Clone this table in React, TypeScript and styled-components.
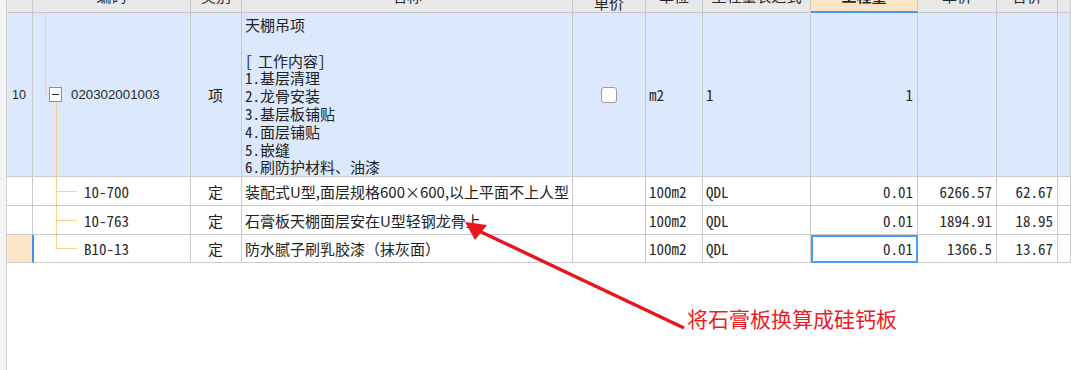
import React from "react";
import styled, { createGlobalStyle, css } from "styled-components";

const GlobalStyle = createGlobalStyle`
  html, body { margin: 0; padding: 0; background: #fff; }
  body { font-family: "Noto Sans CJK SC", "Noto Sans", sans-serif; color: #222; }
`;

const LINE = "#cacaca";
const TREE = "#fbcf8e";
const BLUE = "#3d8ff0";

type Align = "left" | "center" | "right";
type Tone = "blue" | "white" | "mark";
const justify: Record<Align, string> = { left: "flex-start", center: "center", right: "flex-end" };
const toneBg: Record<Tone, string> = { blue: "#dce8fb", white: "#ffffff", mark: "#fde5c8" };

const Page = styled.div`
  position: relative;
  display: flex;
  width: 1071px;
  height: 370px;
  overflow: hidden;
  background: #fff;
`;

const Gutter = styled.div`
  flex: 0 0 7px;
  box-sizing: border-box;
  background: #f3f3f3;
  border-right: 1px solid #d3d3d3;
`;

const Sheet = styled.div`
  flex: 1;
  min-width: 0;
`;

const Grid = styled.div`
  display: grid;
  grid-template-columns: 26px 158px 51px 331px 73px 57px 108px 107px 79px 61px 1fr;
  grid-template-rows: 13px 164px 29px 29px 28px;
`;

const HeadCell = styled.div<{ $active?: boolean }>`
  box-sizing: border-box;
  display: flex;
  align-items: flex-end;
  justify-content: center;
  overflow: hidden;
  background: ${(p) => (p.$active ? "#fde4c4" : "#e8e8e8")};
  border-right: 1px solid ${LINE};
  border-bottom: ${(p) => (p.$active ? "2px solid #4994ee" : "1px solid #c4c4c4")};
`;

const HeadLabel = styled.span<{ $lift: number; $bold?: boolean }>`
  display: block;
  font-size: 15px;
  line-height: 17px;
  padding-bottom: ${(p) => p.$lift}px;
  white-space: nowrap;
  text-align: center;
  font-weight: ${(p) => (p.$bold ? 700 : 400)};
  color: #2a2a2a;
`;

const Cell = styled.div<{ $tone: Tone; $align?: Align; $selected?: boolean; $top?: boolean; $edge?: boolean }>`
  box-sizing: border-box;
  display: flex;
  align-items: ${(p) => (p.$top ? "flex-start" : "center")};
  justify-content: ${(p) => justify[p.$align ?? "left"]};
  padding: 0 4px 0 3px;
  overflow: hidden;
  white-space: nowrap;
  background: ${(p) => toneBg[p.$tone]};
  border-right: 1px solid ${(p) => (p.$edge ? BLUE : LINE)};
  border-bottom: 1px solid ${LINE};
  font-size: 15px;
  color: #222;
  ${(p) =>
    p.$selected &&
    css`
      outline: 2px solid #4a9cf6;
      outline-offset: -2px;
    `}
`;

const TreeCell = styled.div<{ $tone: Tone; $focus?: boolean }>`
  box-sizing: border-box;
  display: flex;
  align-items: stretch;
  overflow: hidden;
  background: ${(p) => toneBg[p.$tone]};
  border-right: 1px solid ${LINE};
  border-bottom: 1px solid ${LINE};
  box-shadow: ${(p) => (p.$focus ? `inset 1px 0 0 ${BLUE}` : "none")};
`;

const Indent = styled.div<{ $w: number }>`
  flex: 0 0 ${(p) => p.$w}px;
`;

const Elbow = styled.div<{ $w: number; $last?: boolean }>`
  flex: 0 0 ${(p) => p.$w}px;
  display: flex;
  flex-direction: column;
  &::before {
    content: "";
    flex: 1;
    border-left: 1px solid ${TREE};
    border-bottom: 1px solid ${TREE};
  }
  &::after {
    content: "";
    flex: 1;
    border-left: 1px solid ${(p) => (p.$last ? "transparent" : TREE)};
  }
`;

const ToggleColumn = styled.div`
  flex: 0 0 13px;
  display: flex;
  flex-direction: column;
  &::before {
    content: "";
    flex: 1;
  }
  &::after {
    content: "";
    flex: 1;
    margin-left: 7px;
    border-left: 1px solid ${TREE};
  }
`;

const ToggleBox = styled.span`
  box-sizing: border-box;
  display: flex;
  align-items: center;
  justify-content: center;
  width: 13px;
  height: 15px;
  border: 1px solid #8d8d8d;
  background: #fff;
  &::before {
    content: "";
    width: 7px;
    height: 1.5px;
    background: #2a2a2a;
  }
`;

const CodeText = styled.span<{ $gap: number }>`
  align-self: center;
  margin-left: ${(p) => p.$gap}px;
  font-family: "Liberation Sans", Arial, sans-serif;
  font-size: 13.3px;
  color: #2a2a2a;
`;

const Mono = styled.span`
  font-family: "Noto Sans Mono CJK SC", "Liberation Mono", monospace;
  font-size: 15px;
  color: #2a2a2a;
`;

const Lead = styled.span<{ $w: number }>`
  display: inline-block;
  width: ${(p) => p.$w}px;
  font-family: "Noto Sans Mono CJK SC", "Liberation Mono", monospace;
`;

const RowNo = styled.span`
  font-family: "Liberation Sans", Arial, sans-serif;
  font-size: 12.5px;
  color: #2a2a2a;
`;

const Lines = styled.div`
  padding-top: 3px;
  font-size: 15px;
  line-height: 17.8px;
  white-space: nowrap;
  color: #222;
`;

const Check = styled.span`
  box-sizing: border-box;
  width: 16px;
  height: 16px;
  border: 1px solid #9c9c9c;
  border-radius: 3px;
  background: #fff;
`;

const Overlay = styled.svg`
  position: absolute;
  left: 0;
  top: 0;
  pointer-events: none;
`;

const Callout = styled.div`
  position: absolute;
  left: 687px;
  top: 305px;
  font-family: "Noto Sans CJK SC", sans-serif;
  font-size: 21px;
  line-height: 26px;
  color: #ea1c24;
  white-space: nowrap;
`;

const headers: { label: React.ReactNode; lift: number; active?: boolean }[] = [
  { label: "", lift: 8 },
  { label: "编码", lift: 8 },
  { label: "类别", lift: 8 },
  { label: "名称", lift: 8 },
  { label: (<>锁定综合<br />单价</>), lift: 1 },
  { label: "单位", lift: 8 },
  { label: "工程量表达式", lift: 8 },
  { label: "工程量", lift: 7, active: true },
  { label: "单价", lift: 8 },
  { label: "合价", lift: 8 },
  { label: "", lift: 8 },
];

const workLines: { lead?: string; leadW?: number; text: string; tail?: string }[] = [
  { text: "天棚吊项" },
  { text: "\u00a0" },
  { lead: "[", leadW: 13, text: "工作内容", tail: "]" },
  { lead: "1.", leadW: 15, text: "基层清理" },
  { lead: "2.", leadW: 15, text: "龙骨安装" },
  { lead: "3.", leadW: 15, text: "基层板铺贴" },
  { lead: "4.", leadW: 15, text: "面层铺贴" },
  { lead: "5.", leadW: 15, text: "嵌缝" },
  { lead: "6.", leadW: 15, text: "刷防护材料、油漆" },
];

type Sub = { code: string; name: string; price: string; total: string; last?: boolean; focus?: boolean };

const subs: Sub[] = [
  { code: "10-700", name: "装配式U型,面层规格600×600,以上平面不上人型", price: "6266.57", total: "62.67" },
  { code: "10-763", name: "石膏板天棚面层安在U型轻钢龙骨上", price: "1894.91", total: "18.95" },
  { code: "B10-13", name: "防水腻子刷乳胶漆（抹灰面）", price: "1366.5", total: "13.67", last: true, focus: true },
];

function SubRow({ row }: { row: Sub }) {
  const t: Tone = "white";
  return (
    <>
      <Cell $tone={row.focus ? "mark" : t} $edge={row.focus} />
      <TreeCell $tone={t} $focus={row.focus}>
        <Indent $w={23} />
        <Elbow $w={21} $last={row.last} />
        <CodeText $gap={7} as={Mono}>{row.code}</CodeText>
      </TreeCell>
      <Cell $tone={t} $align="center">定</Cell>
      <Cell $tone={t}>{row.name}</Cell>
      <Cell $tone={t} />
      <Cell $tone={t}><Mono>100m2</Mono></Cell>
      <Cell $tone={t}><Mono>QDL</Mono></Cell>
      <Cell $tone={t} $align="right" $selected={row.focus}><Mono>0.01</Mono></Cell>
      <Cell $tone={t} $align="right"><Mono>{row.price}</Mono></Cell>
      <Cell $tone={t} $align="right"><Mono>{row.total}</Mono></Cell>
      <Cell $tone={t} />
    </>
  );
}

export default function App() {
  const b: Tone = "blue";
  return (
    <>
      <GlobalStyle />
      <Page>
        <Gutter />
        <Sheet>
          <Grid>
            {headers.map((h, i) => (
              <HeadCell key={i} $active={h.active}>
                <HeadLabel $lift={h.lift} $bold={h.active}>{h.label}</HeadLabel>
              </HeadCell>
            ))}
            <Cell $tone={b} $align="center"><RowNo>10</RowNo></Cell>
            <TreeCell $tone={b}>
              <Indent $w={12} />
              <Elbow $w={4} $last />
              <ToggleColumn>
                <ToggleBox />
              </ToggleColumn>
              <CodeText $gap={9}>020302001003</CodeText>
            </TreeCell>
            <Cell $tone={b} $align="center">项</Cell>
            <Cell $tone={b} $top>
              <Lines>
                {workLines.map((l, i) => (
                  <div key={i}>
                    {l.lead && <Lead $w={l.leadW ?? 15}>{l.lead}</Lead>}
                    {l.text}
                    {l.tail && <Lead $w={8}>{l.tail}</Lead>}
                  </div>
                ))}
              </Lines>
            </Cell>
            <Cell $tone={b} $align="center"><Check /></Cell>
            <Cell $tone={b}><Mono>m2</Mono></Cell>
            <Cell $tone={b}><Mono>1</Mono></Cell>
            <Cell $tone={b} $align="right"><Mono>1</Mono></Cell>
            <Cell $tone={b} />
            <Cell $tone={b} />
            <Cell $tone={b} />
            {subs.map((s) => (
              <SubRow key={s.code} row={s} />
            ))}
          </Grid>
        </Sheet>
        <Overlay width={1071} height={370} viewBox="0 0 1071 370">
          <line x1={684} y1={328} x2={479} y2={231} stroke="#e8151f" strokeWidth={3.4} strokeLinecap="butt" />
          <polygon points="465,222 475,240 487,225" fill="#e8151f" />
        </Overlay>
        <Callout>将石膏板换算成硅钙板</Callout>
      </Page>
    </>
  );
}
